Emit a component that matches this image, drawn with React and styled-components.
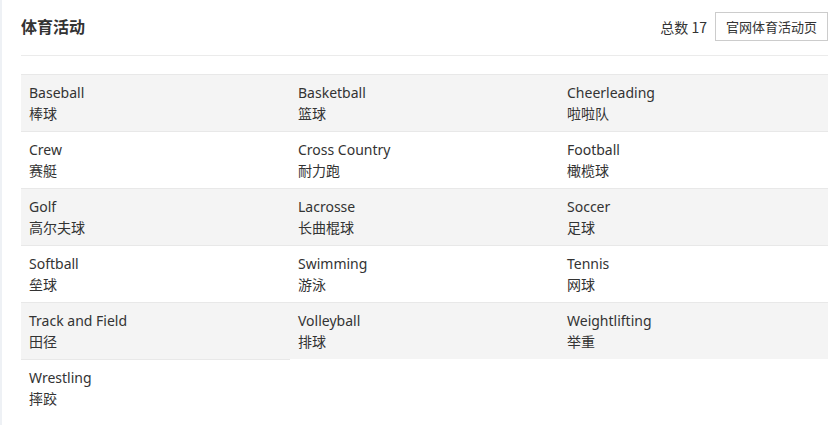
import React from "react";
import styled, { createGlobalStyle } from "styled-components";

const Global = createGlobalStyle`
  html, body { margin: 0; padding: 0; background: #fff; }
  body { font-family: "Noto Sans", "Noto Sans CJK SC", sans-serif; color: #333; }
`;

const Page = styled.div`
  min-height: 425px;
  box-sizing: border-box;
  border-left: 2px solid #eef1f5;
  padding: 0 11px 0 19px;
`;

const Header = styled.div`
  height: 55px;
  border-bottom: 1px solid #ebebeb;
  display: flex;
  align-items: center;
  justify-content: space-between;
`;

const Title = styled.h2`
  margin: 0 0 3px;
  font-size: 16px;
  font-weight: 700;
  color: #333;
  font-family: "Noto Sans CJK SC", sans-serif;
`;

const Right = styled.div`
  display: flex;
  align-items: center;
  gap: 8px;
  font-size: 14px;
  font-family: "Noto Sans CJK SC", sans-serif;
  margin-bottom: 2px;
`;

const Button = styled.a`
  display: inline-flex;
  align-items: center;
  height: 29px;
  box-sizing: border-box;
  padding: 0 10px;
  border: 1px solid #ccc;
  font-size: 13px;
  color: #333;
  background: #fff;
  text-decoration: none;
`;

const Grid = styled.div`
  margin-top: 18px;
  display: grid;
  grid-template-columns: repeat(3, 1fr);
`;

const Cell = styled.div`
  border-top: 1px solid #e8e8e8;
  background: ${(p) => (p.$shade ? "#f4f4f4" : "#fff")};
  padding: 8px;
  line-height: 20px;
`;

const En = styled.div`
  font-size: 14px;
  font-family: "Noto Sans", sans-serif;
`;

const Zh = styled.div`
  font-size: 14px;
  font-family: "Noto Sans CJK SC", sans-serif;
`;

const sports = [
  ["Baseball", "棒球"],
  ["Basketball", "篮球"],
  ["Cheerleading", "啦啦队"],
  ["Crew", "赛艇"],
  ["Cross Country", "耐力跑"],
  ["Football", "橄榄球"],
  ["Golf", "高尔夫球"],
  ["Lacrosse", "长曲棍球"],
  ["Soccer", "足球"],
  ["Softball", "垒球"],
  ["Swimming", "游泳"],
  ["Tennis", "网球"],
  ["Track and Field", "田径"],
  ["Volleyball", "排球"],
  ["Weightlifting", "举重"],
  ["Wrestling", "摔跤"],
];

export default function App() {
  return (
    <>
      <Global />
      <Page>
        <Header>
          <Title>体育活动</Title>
          <Right>
            <span>总数 17</span>
            <Button href="#">官网体育活动页</Button>
          </Right>
        </Header>
        <Grid>
          {sports.map(([en, zh], i) => (
            <Cell key={en} $shade={Math.floor(i / 3) % 2 === 0}>
              <En>{en}</En>
              <Zh>{zh}</Zh>
            </Cell>
          ))}
        </Grid>
      </Page>
    </>
  );
}
